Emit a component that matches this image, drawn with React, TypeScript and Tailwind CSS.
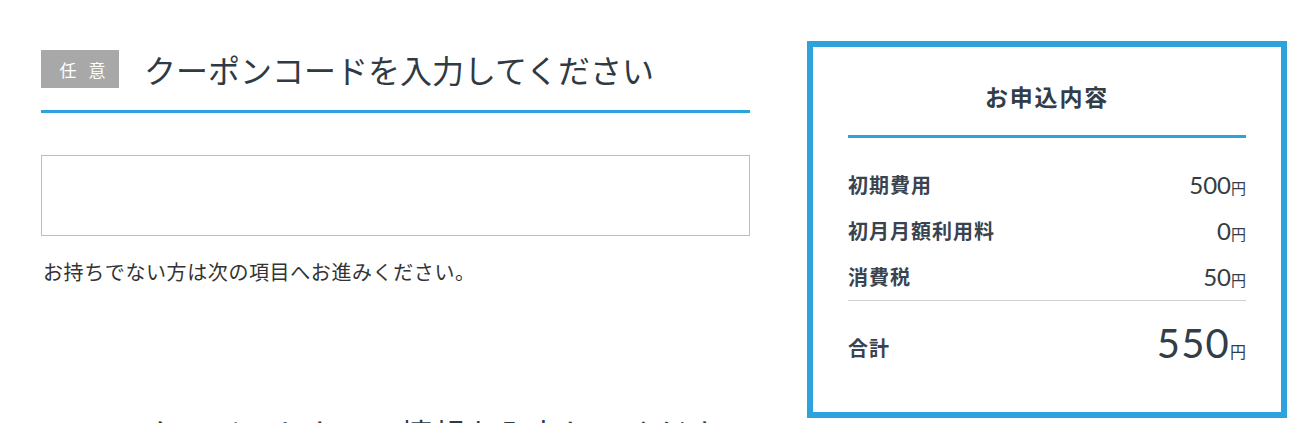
import React from 'react';

const rows = [
    {label: '初期費用', price: '500'},
    {label: '初月月額利用料', price: '0'},
    {label: '消費税', price: '50'},
];

const jp = "font-['Noto_Sans_CJK_JP',sans-serif]";
const num = "font-['Lato','Noto_Sans_CJK_JP',sans-serif]";

const CouponSection = () => {
    return (
        <div className="w-[709px] pt-[50px]">
            <div className="flex items-center gap-[25px] border-b-[3px] border-[#2da2dc] pb-[22px]">
                <span className="flex h-[38px] w-[78px] items-center justify-center bg-[#a8a8a8] pl-[17px] text-[17px] leading-none tracking-[0.7em] text-white">
                    任意
                </span>
                <h2 className="text-[32px] leading-[38px] font-normal text-[#2f3a44]">
                    クーポンコードを入力してください
                </h2>
            </div>
            <input
                type="text"
                className="mt-[42px] block h-[81px] w-full border border-[#bdbdbd] bg-white px-4 text-[20px] outline-none"
            />
            <p className="mt-[22px] pl-[2px] text-[20px] leading-[28px] tracking-[0.03em] text-[#333]">
                お持ちでない方は次の項目へお進みください。
            </p>
            <h2 className="mt-[128px] pl-[104px] text-[32px] leading-[38px] font-normal text-[#2f3a44]">
                クレジットカード情報を入力してください
            </h2>
        </div>
    );
};

const SummaryBox = () => {
    return (
        <div className="mt-[41px] h-[377px] w-[480px] border-[6px] border-[#2da2dc] bg-white px-[35px] pt-[34px]">
            <h3 className="border-b-[3px] border-[#2da2dc] pb-[23px] text-center text-[23px] leading-[31px] font-bold tracking-[0.08em] text-[#333d47]">
                お申込内容
            </h3>
            <div className="mt-[24px]">
                {rows.map((row) => (
                    <div key={row.label} className="flex h-[46px] items-center justify-between">
                        <span className="text-[20px] font-bold tracking-[0.05em] text-[#3a4450]">{row.label}</span>
                        <span className={`${num} text-[24px] text-[#333d47]`}>
                            {row.price}
                            <span className={`${jp} text-[15px]`}>円</span>
                        </span>
                    </div>
                ))}
            </div>
            <div className="flex h-[94px] items-center justify-between border-t border-[#d0d0d0]">
                <span className="text-[20px] font-bold tracking-[0.05em] text-[#3a4450]">合計</span>
                <span className={`${num} -mt-[10px] text-[40px] leading-none tracking-[0.03em] text-[#333d47]`}>
                    550
                    <span className={`${jp} text-[16px] tracking-normal`}>円</span>
                </span>
            </div>
        </div>
    );
};

const App = () => {
    return (
        <div className={`${jp} flex h-[423px] w-[1300px] overflow-hidden bg-white pl-[41px]`}>
            <CouponSection/>
            <div className="ml-[57px]">
                <SummaryBox/>
            </div>
        </div>
    );
};

export default App;
